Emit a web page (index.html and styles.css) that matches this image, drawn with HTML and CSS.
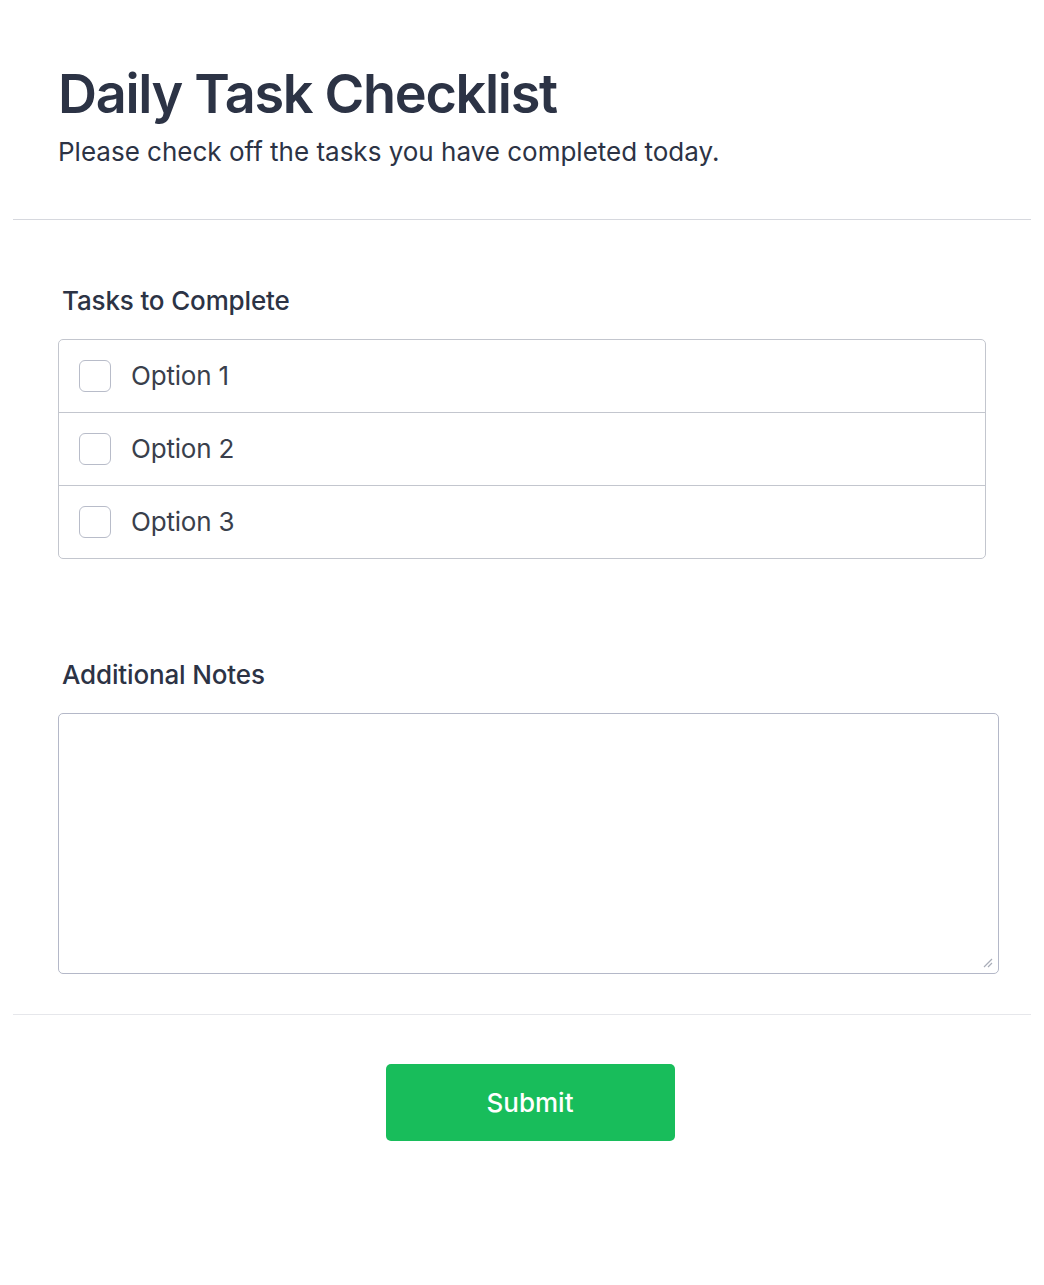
FILE: index.html
```html
<!DOCTYPE html>
<html lang="en">
<head>
<meta charset="utf-8">
<title>Daily Task Checklist</title>
<link rel="stylesheet" href="styles.css">
</head>
<body>
<div class="page">
  <header class="header">
    <h1 class="title">Daily Task Checklist</h1>
    <p class="subtitle">Please check off the tasks you have completed today.</p>
  </header>
  <main class="body">
    <section class="field field-tasks">
      <div class="label">Tasks to Complete</div>
      <div class="options">
        <label class="option"><span class="box"></span><span class="opt-text">Option 1</span></label>
        <label class="option"><span class="box"></span><span class="opt-text">Option 2</span></label>
        <label class="option"><span class="box"></span><span class="opt-text">Option 3</span></label>
      </div>
    </section>
    <section class="field field-notes">
      <div class="label">Additional Notes</div>
      <div class="textarea">
        <svg class="grip" width="12" height="12" viewBox="0 0 12 12"><path d="M11 3 L3 11 M11 7 L7 11" stroke="#a9adb8" stroke-width="1.2" fill="none"/></svg>
      </div>
    </section>
  </main>
  <footer class="footer">
    <button class="submit">Submit</button>
  </footer>
</div>
</body>
</html>
```

FILE: styles.css
```css
* { box-sizing: border-box; }
html, body { margin: 0; padding: 0; background: #fff; }
body { font-family: Inter, "Noto Sans", sans-serif; color: #2c3345; }
.page { margin: 0 13px; }
.header {
  padding: 62px 0 51px 45px;
  border-bottom: 1px solid #d6d8de;
}
.title {
  margin: 0;
  font-size: 54px;
  font-weight: 600;
  line-height: 64px;
  color: #2c3345;
  letter-spacing: -1.3px;
}
.subtitle {
  margin: 10px 0 0;
  font-size: 26px;
  line-height: 32px;
  color: #2c3345;
}
.body { padding: 65px 0 40px 45px; }
.field-tasks { margin-right: 45px; }
.label {
  font-size: 26px;
  font-weight: 500;
  line-height: 32px;
  padding-left: 4px;
  margin-bottom: 22px;
  color: #2c3345;
  letter-spacing: -0.15px;
}
.options {
  border: 1px solid #c3c6ce;
  border-radius: 5px;
}
.option {
  display: flex;
  align-items: center;
  height: 73px;
  padding-left: 20px;
  border-top: 1px solid #c3c6ce;
}
.option:first-child { border-top: none; height: 72px; }
.box {
  width: 32px;
  height: 32px;
  border: 1px solid #b8bcc9;
  border-radius: 6px;
  margin-right: 20px;
  flex: none;
}
.opt-text {
  font-size: 26px;
  color: #3a3f4c;
  line-height: 32px;
  letter-spacing: -0.2px;
}
.field-notes { margin-top: 100px; margin-right: 32px; }
.textarea {
  position: relative;
  height: 261px;
  border: 1.5px solid #b4b8c8;
  border-radius: 5px;
}
.grip { position: absolute; right: 5px; bottom: 5px; }
.footer {
  border-top: 1px solid #e6e7eb;
  padding: 49px 0 100px 16px;
  display: flex;
  justify-content: center;
}
.submit {
  width: 289px;
  height: 77px;
  background: #18bd5b;
  color: #fff;
  border: none;
  border-radius: 5px;
  font-family: Inter, "Noto Sans", sans-serif;
  font-size: 26px;
  font-weight: 500;
  cursor: pointer;
}
```
